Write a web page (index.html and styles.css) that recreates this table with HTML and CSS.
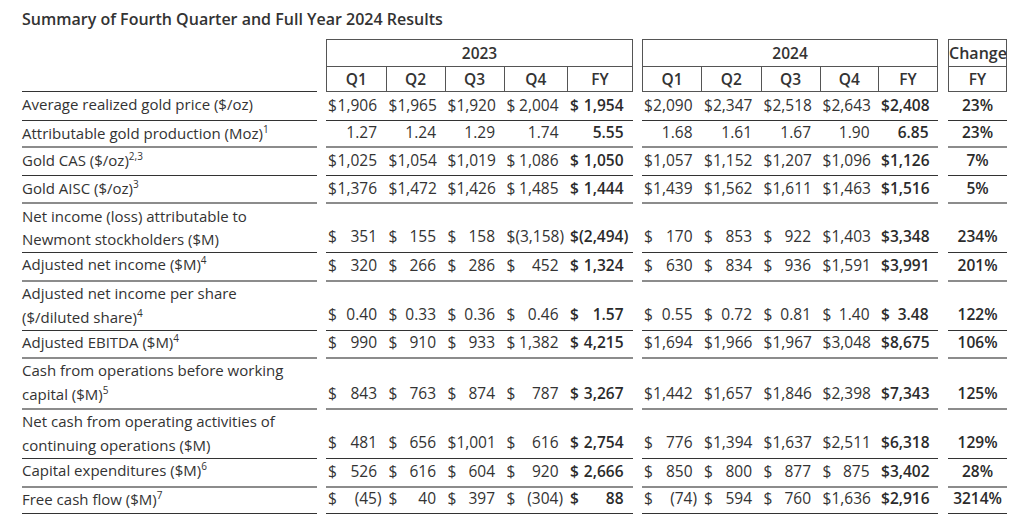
FILE: index.html
```html
<!DOCTYPE html>
<html lang="en">
<head>
<meta charset="utf-8">
<title>Summary of Fourth Quarter and Full Year 2024 Results</title>
<link rel="stylesheet" href="styles.css">
</head>
<body>
<div class="page">
  <h1 class="title">Summary of Fourth Quarter and Full Year 2024 Results</h1>
  <table class="results">
    <colgroup>
      <col class="w-label"><col class="w-sp9">
      <col class="w-605"><col class="w-59"><col class="w-59"><col class="w-635"><col class="w-65">
      <col class="w-sp9">
      <col class="w-60"><col class="w-595"><col class="w-59"><col class="w-585"><col class="w-59">
      <col class="w-sp10"><col class="w-59">
    </colgroup>
    <thead>
      <tr class="h-year">
        <th class="h-label" rowspan="2"></th><th class="sp" rowspan="2"></th>
        <th class="h-yr" colspan="5">2023</th>
        <th class="sp" rowspan="2"></th>
        <th class="h-yr" colspan="5">2024</th>
        <th class="sp" rowspan="2"></th>
        <th class="h-yr h-change">Change</th>
      </tr>
      <tr class="h-q">
        <th class="h-qc first">Q1</th><th class="h-qc">Q2</th><th class="h-qc">Q3</th><th class="h-qc">Q4</th><th class="h-qc">FY</th>
        <th class="h-qc first">Q1</th><th class="h-qc">Q2</th><th class="h-qc">Q3</th><th class="h-qc">Q4</th><th class="h-qc">FY</th>
        <th class="h-qc first">FY</th>
      </tr>
    </thead>
    <tbody>
      <tr class="dk h29">
        <td class="lbl">Average realized gold price ($/oz)</td><td class="sp"></td>
        <td class="m"><span class="d">$</span>1,906</td><td class="m"><span class="d">$</span>1,965</td><td class="m"><span class="d">$</span>1,920</td><td class="m"><span class="d">$</span>2,004</td><td class="m b"><span class="d">$</span>1,954</td>
        <td class="sp"></td>
        <td class="m"><span class="d">$</span>2,090</td><td class="m"><span class="d">$</span>2,347</td><td class="m"><span class="d">$</span>2,518</td><td class="m"><span class="d">$</span>2,643</td><td class="m b"><span class="d">$</span>2,408</td>
        <td class="sp"></td><td class="chg">23%</td>
      </tr>
      <tr class="gr h27">
        <td class="lbl">Attributable gold production (Moz)<sup>1</sup></td><td class="sp"></td>
        <td class="m">1.27</td><td class="m">1.24</td><td class="m">1.29</td><td class="m">1.74</td><td class="m b">5.55</td>
        <td class="sp"></td>
        <td class="m">1.68</td><td class="m">1.61</td><td class="m">1.67</td><td class="m">1.90</td><td class="m b">6.85</td>
        <td class="sp"></td><td class="chg">23%</td>
      </tr>
      <tr class="dk h28">
        <td class="lbl">Gold CAS ($/oz)<sup>2,3</sup></td><td class="sp"></td>
        <td class="m"><span class="d">$</span>1,025</td><td class="m"><span class="d">$</span>1,054</td><td class="m"><span class="d">$</span>1,019</td><td class="m"><span class="d">$</span>1,086</td><td class="m b"><span class="d">$</span>1,050</td>
        <td class="sp"></td>
        <td class="m"><span class="d">$</span>1,057</td><td class="m"><span class="d">$</span>1,152</td><td class="m"><span class="d">$</span>1,207</td><td class="m"><span class="d">$</span>1,096</td><td class="m b"><span class="d">$</span>1,126</td>
        <td class="sp"></td><td class="chg">7%</td>
      </tr>
      <tr class="gr h28">
        <td class="lbl">Gold AISC ($/oz)<sup>3</sup></td><td class="sp"></td>
        <td class="m"><span class="d">$</span>1,376</td><td class="m"><span class="d">$</span>1,472</td><td class="m"><span class="d">$</span>1,426</td><td class="m"><span class="d">$</span>1,485</td><td class="m b"><span class="d">$</span>1,444</td>
        <td class="sp"></td>
        <td class="m"><span class="d">$</span>1,439</td><td class="m"><span class="d">$</span>1,562</td><td class="m"><span class="d">$</span>1,611</td><td class="m"><span class="d">$</span>1,463</td><td class="m b"><span class="d">$</span>1,516</td>
        <td class="sp"></td><td class="chg">5%</td>
      </tr>
      <tr class="dk h48">
        <td class="lbl">Net income (loss) attributable to<br>Newmont stockholders ($M)</td><td class="sp"></td>
        <td class="m"><span class="d">$</span>351</td><td class="m"><span class="d">$</span>155</td><td class="m"><span class="d">$</span>158</td><td class="m neg"><span class="d">$</span>(3,158)</td><td class="m b neg"><span class="d">$</span>(2,494)</td>
        <td class="sp"></td>
        <td class="m"><span class="d">$</span>170</td><td class="m"><span class="d">$</span>853</td><td class="m"><span class="d">$</span>922</td><td class="m"><span class="d">$</span>1,403</td><td class="m b"><span class="d">$</span>3,348</td>
        <td class="sp"></td><td class="chg">234%</td>
      </tr>
      <tr class="gr h29">
        <td class="lbl">Adjusted net income ($M)<sup>4</sup></td><td class="sp"></td>
        <td class="m"><span class="d">$</span>320</td><td class="m"><span class="d">$</span>266</td><td class="m"><span class="d">$</span>286</td><td class="m"><span class="d">$</span>452</td><td class="m b"><span class="d">$</span>1,324</td>
        <td class="sp"></td>
        <td class="m"><span class="d">$</span>630</td><td class="m"><span class="d">$</span>834</td><td class="m"><span class="d">$</span>936</td><td class="m"><span class="d">$</span>1,591</td><td class="m b"><span class="d">$</span>3,991</td>
        <td class="sp"></td><td class="chg">201%</td>
      </tr>
      <tr class="dk h49">
        <td class="lbl">Adjusted net income per share<br>($/diluted share)<sup>4</sup></td><td class="sp"></td>
        <td class="m"><span class="d">$</span>0.40</td><td class="m"><span class="d">$</span>0.33</td><td class="m"><span class="d">$</span>0.36</td><td class="m"><span class="d">$</span>0.46</td><td class="m b"><span class="d">$</span>1.57</td>
        <td class="sp"></td>
        <td class="m"><span class="d">$</span>0.55</td><td class="m"><span class="d">$</span>0.72</td><td class="m"><span class="d">$</span>0.81</td><td class="m"><span class="d">$</span>1.40</td><td class="m b"><span class="d">$</span>3.48</td>
        <td class="sp"></td><td class="chg">122%</td>
      </tr>
      <tr class="gr h28">
        <td class="lbl">Adjusted EBITDA ($M)<sup>4</sup></td><td class="sp"></td>
        <td class="m"><span class="d">$</span>990</td><td class="m"><span class="d">$</span>910</td><td class="m"><span class="d">$</span>933</td><td class="m"><span class="d">$</span>1,382</td><td class="m b"><span class="d">$</span>4,215</td>
        <td class="sp"></td>
        <td class="m"><span class="d">$</span>1,694</td><td class="m"><span class="d">$</span>1,966</td><td class="m"><span class="d">$</span>1,967</td><td class="m"><span class="d">$</span>3,048</td><td class="m b"><span class="d">$</span>8,675</td>
        <td class="sp"></td><td class="chg">106%</td>
      </tr>
      <tr class="gr h51">
        <td class="lbl">Cash from operations before working<br>capital ($M)<sup>5</sup></td><td class="sp"></td>
        <td class="m"><span class="d">$</span>843</td><td class="m"><span class="d">$</span>763</td><td class="m"><span class="d">$</span>874</td><td class="m"><span class="d">$</span>787</td><td class="m b"><span class="d">$</span>3,267</td>
        <td class="sp"></td>
        <td class="m"><span class="d">$</span>1,442</td><td class="m"><span class="d">$</span>1,657</td><td class="m"><span class="d">$</span>1,846</td><td class="m"><span class="d">$</span>2,398</td><td class="m b"><span class="d">$</span>7,343</td>
        <td class="sp"></td><td class="chg">125%</td>
      </tr>
      <tr class="dk h49">
        <td class="lbl">Net cash from operating activities of<br>continuing operations ($M)</td><td class="sp"></td>
        <td class="m"><span class="d">$</span>481</td><td class="m"><span class="d">$</span>656</td><td class="m"><span class="d">$</span>1,001</td><td class="m"><span class="d">$</span>616</td><td class="m b"><span class="d">$</span>2,754</td>
        <td class="sp"></td>
        <td class="m"><span class="d">$</span>776</td><td class="m"><span class="d">$</span>1,394</td><td class="m"><span class="d">$</span>1,637</td><td class="m"><span class="d">$</span>2,511</td><td class="m b"><span class="d">$</span>6,318</td>
        <td class="sp"></td><td class="chg">129%</td>
      </tr>
      <tr class="gr h29">
        <td class="lbl">Capital expenditures ($M)<sup>6</sup></td><td class="sp"></td>
        <td class="m"><span class="d">$</span>526</td><td class="m"><span class="d">$</span>616</td><td class="m"><span class="d">$</span>604</td><td class="m"><span class="d">$</span>920</td><td class="m b"><span class="d">$</span>2,666</td>
        <td class="sp"></td>
        <td class="m"><span class="d">$</span>850</td><td class="m"><span class="d">$</span>800</td><td class="m"><span class="d">$</span>877</td><td class="m"><span class="d">$</span>875</td><td class="m b"><span class="d">$</span>3,402</td>
        <td class="sp"></td><td class="chg">28%</td>
      </tr>
      <tr class="dk h26">
        <td class="lbl">Free cash flow ($M)<sup>7</sup></td><td class="sp"></td>
        <td class="m neg"><span class="d">$</span>(45)</td><td class="m"><span class="d">$</span>40</td><td class="m"><span class="d">$</span>397</td><td class="m neg"><span class="d">$</span>(304)</td><td class="m b"><span class="d">$</span>88</td>
        <td class="sp"></td>
        <td class="m neg"><span class="d">$</span>(74)</td><td class="m"><span class="d">$</span>594</td><td class="m"><span class="d">$</span>760</td><td class="m"><span class="d">$</span>1,636</td><td class="m b"><span class="d">$</span>2,916</td>
        <td class="sp"></td><td class="chg">3214%</td>
      </tr>
    </tbody>
  </table>
</div>
</body>
</html>
```

FILE: styles.css
```css
html, body {
  margin: 0;
  padding: 0;
  background: #ffffff;
}

body {
  color: #333333;
  font-family: "Open Sans", "Noto Sans", "DejaVu Sans", sans-serif;
}

.page {
  padding: 8px 0 0 22px;
}

.title {
  margin: 0 0 9px;
  font-size: 16px;
  line-height: 22px;
  font-weight: 600;
  color: #333333;
}

.results {
  border-collapse: separate;
  border-spacing: 0;
  table-layout: fixed;
  width: 985px;
  font-size: 15.5px;
  line-height: 20px;
}

.w-label { width: 295px; }
.w-sp9 { width: 9px; }
.w-sp10 { width: 10px; }
.w-605 { width: 60.5px; }
.w-59 { width: 59px; }
.w-635 { width: 63.5px; }
.w-65 { width: 65px; }
.w-60 { width: 60px; }
.w-595 { width: 59.5px; }
.w-585 { width: 58.5px; }

.results th,
.results td {
  padding: 0;
}

/* header */
.h-year { height: 28px; }
.h-q { height: 25px; }

.results th {
  font-weight: 600;
  text-align: center;
  vertical-align: middle;
  white-space: nowrap;
  line-height: 22px;
}

.h-yr {
  border: 1px solid #555555;
}

.h-qc {
  border-right: 1px solid #555555;
  border-bottom: 1px solid #555555;
}

.h-qc.first {
  border-left: 1px solid #555555;
}

.h-label {
  border-bottom: 1px solid #333333;
}

.h-change {
  font-size: 16px;
  font-weight: 500;
}

.sp {
  border: none;
}

/* body rows: heights include the bottom rule */
.h26 { height: 26px; }
.h27 { height: 27px; }
.h28 { height: 28px; }
.h29 { height: 29px; }
.h48 { height: 48px; }
.h49 { height: 49px; }
.h51 { height: 51px; }

.dk td:not(.sp) { border-bottom: 1px solid #333333; }
.gr td:not(.sp) { border-bottom: 2px solid #8c8c8c; }

.lbl {
  vertical-align: top;
  white-space: nowrap;
  font-size: 15px;
  line-height: 23.5px;
  padding-top: 0.5px !important;
}

.m {
  vertical-align: bottom;
  text-align: right;
  white-space: nowrap;
  padding: 0 9.5px 5.5px 2px !important;
}

.gr .m {
  padding-bottom: 4.5px !important;
}

.m.neg {
  padding-right: 5px !important;
}

.d {
  float: left;
}

.b {
  font-weight: 600;
  color: #2b2b2b;
}

.chg {
  vertical-align: bottom;
  text-align: center;
  font-weight: 600;
  color: #2b2b2b;
  padding-bottom: 5.5px !important;
}

.gr .chg {
  padding-bottom: 4.5px !important;
}

sup {
  font-size: 10px;
  line-height: 0;
  vertical-align: 6px;
}
```
